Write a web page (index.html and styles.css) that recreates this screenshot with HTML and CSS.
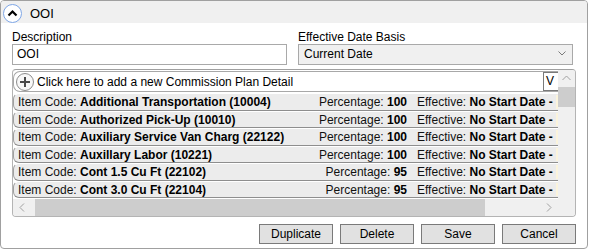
FILE: index.html
```html
<!DOCTYPE html>
<html>
<head>
<meta charset="utf-8">
<link rel="stylesheet" href="styles.css">
</head>
<body>
<div class="panel">
  <div class="header">
    <span class="collapse">
      <svg width="11" height="8" viewBox="0 0 11 8"><path d="M1.5 6.5 L5.5 2.5 L9.5 6.5" fill="none" stroke="#000" stroke-width="2.2"/></svg>
    </span>
    <span class="title">OOI</span>
  </div>
  <div class="content">
    <div class="fields">
      <div class="field">
        <label class="lbl">Description</label>
        <div class="input">OOI</div>
      </div>
      <div class="field">
        <label class="lbl">Effective Date Basis</label>
        <div class="select">Current Date
          <svg class="caret" width="8" height="5" viewBox="0 0 8 5"><path d="M0.5 0.5 L4 4 L7.5 0.5" fill="none" stroke="#7a7a7a" stroke-width="1"/></svg>
        </div>
      </div>
    </div>
    <div class="list">
      <div class="viewport">
        <div class="rows">
          <div class="addrow">
            <span class="plus">
              <svg width="12" height="12" viewBox="0 0 12 12"><path d="M6 1 V11 M1 6 H11" stroke="#4a4a4a" stroke-width="2"/></svg>
            </span>
            <span class="addtext">Click here to add a new Commission Plan Detail</span>
            <span class="viewbtn">V</span>
          </div>
          <div class="row"><span class="code">Item Code: <b>Additional Transportation (10004)</b></span><span class="pct">Percentage: <b>100</b></span><span class="eff">Effective: <b>No Start Date -</b></span><span class="tail"></span></div>
          <div class="row"><span class="code">Item Code: <b>Authorized Pick-Up (10010)</b></span><span class="pct">Percentage: <b>100</b></span><span class="eff">Effective: <b>No Start Date -</b></span><span class="tail"></span></div>
          <div class="row"><span class="code">Item Code: <b>Auxiliary Service Van Charg (22122)</b></span><span class="pct">Percentage: <b>100</b></span><span class="eff">Effective: <b>No Start Date -</b></span><span class="tail"></span></div>
          <div class="row"><span class="code">Item Code: <b>Auxillary Labor (10221)</b></span><span class="pct">Percentage: <b>100</b></span><span class="eff">Effective: <b>No Start Date -</b></span><span class="tail"></span></div>
          <div class="row"><span class="code">Item Code: <b>Cont 1.5 Cu Ft (22102)</b></span><span class="pct">Percentage: <b>95</b></span><span class="eff">Effective: <b>No Start Date -</b></span><span class="tail"></span></div>
          <div class="row"><span class="code">Item Code: <b>Cont 3.0 Cu Ft (22104)</b></span><span class="pct">Percentage: <b>95</b></span><span class="eff">Effective: <b>No Start Date -</b></span><span class="tail"></span></div>
        </div>
      </div>
      <div class="vscroll">
        <svg class="uparrow" width="9" height="6" viewBox="0 0 9 6"><path d="M0.5 5 L4.5 1 L8.5 5" fill="none" stroke="#a0a0a0" stroke-width="1"/></svg>
        <div class="vthumb"></div>
      </div>
      <div class="hscroll">
        <svg class="leftarrow" width="6" height="9" viewBox="0 0 6 9"><path d="M5 0.5 L1 4.5 L5 8.5" fill="none" stroke="#a0a0a0" stroke-width="1"/></svg>
        <div class="hthumb"></div>
        <svg class="rightarrow" width="6" height="9" viewBox="0 0 6 9"><path d="M1 0.5 L5 4.5 L1 8.5" fill="none" stroke="#a0a0a0" stroke-width="1"/></svg>
      </div>
      <div class="corner"></div>
    </div>
    <div class="buttons">
      <button class="btn">Duplicate</button>
      <button class="btn">Delete</button>
      <button class="btn">Save</button>
      <button class="btn">Cancel</button>
    </div>
  </div>
</div>
</body>
</html>
```

FILE: styles.css
```css
* { box-sizing: border-box; }
html, body { margin: 0; padding: 0; background: #fff; }
body {
  font-family: "Liberation Sans", Arial, sans-serif;
  font-size: 12px;
  color: #000;
}
.panel {
  width: 588px;
  height: 249px;
  border: 1px solid #a0a0a0;
  border-radius: 4px;
  overflow: hidden;
  display: flex;
  flex-direction: column;
}
.header {
  height: 22px;
  background: #f0f0f0;
  display: flex;
  align-items: center;
  padding-left: 2px;
}
.collapse {
  width: 19px;
  height: 19px;
  margin-top: 3px;
  border: 1.5px solid #7ea6e6;
  border-radius: 50%;
  background: #fff;
  display: flex;
  align-items: center;
  justify-content: center;
}
.collapse svg { margin-top: -1px; }
.title {
  margin-left: 8px;
  font-size: 13px;
  margin-top: 2px;
}
.content {
  padding: 0 11px;
  flex: 1;
  display: flex;
  flex-direction: column;
}
.fields {
  display: grid;
  grid-template-columns: 275px 275px;
  column-gap: 11px;
  margin-top: 7px;
}
.field { display: flex; flex-direction: column; }
.lbl { height: 14px; line-height: 14px; font-size: 12px; }
.input, .select {
  height: 21px;
  border: 1px solid #a9a9a9;
  line-height: 19px;
  padding-left: 4px;
  font-size: 12px;
}
.input { background: #fff; }
.select {
  background: #f0f0f0;
  position: relative;
  padding-left: 5px;
}
.caret { position: absolute; right: 6px; top: 6px; }
.list {
  margin-top: 4px;
  width: 564px;
  height: 148px;
  border: 1px solid #b4b4b4;
  border-top-color: #a0a0a0;
  border-radius: 4px;
  display: grid;
  grid-template-columns: 1fr 17px;
  grid-template-rows: 1fr 17px;
  overflow: hidden;
  background: #fff;
}
.viewport {
  overflow: hidden;
  grid-column: 1;
  grid-row: 1;
}
.rows { width: 545px; padding-top: 1px; }
.addrow {
  height: 21px;
  border: 1px solid #a8a8a8;
  border-right: none;
  border-radius: 7px 0 0 7px;
  display: flex;
  align-items: center;
  background: #fff;
  margin-bottom: 1px;
}
.plus {
  width: 18px;
  height: 18px;
  margin-left: 2px;
  border: 1px solid #8c8c8c;
  border-radius: 50%;
  display: flex;
  align-items: center;
  justify-content: center;
  background: #f8f8f8;
}
.addtext { margin-left: 3px; width: 506px; white-space: nowrap; }
.viewbtn {
  flex: 1;
  height: 19px;
  line-height: 17px;
  border: 1px solid #7a7a7a;
  border-right: none;
  padding-left: 2px;
  background: #fff;
  overflow: hidden;
}
.row {
  height: 17.5px;
  line-height: 16px;
  border-left: 1px solid #a0a0a0;
  border-bottom: 1px solid #8e8e8e;
  border-top: 1px solid #fff;
  border-radius: 6px 0 0 6px;
  background: #ececec;
  display: flex;
  white-space: nowrap;
  color: #111;
}
.code { width: 290px; padding-left: 4px; }
.pct { width: 103px; text-align: right; }
.eff { margin-left: 10px; width: 139px; }
.tail { flex: 1; background: #fbf4dc; margin: 1px 0; }
b { font-weight: bold; color: #000; }
.vscroll {
  grid-column: 2;
  grid-row: 1;
  background: #f0f0f0;
  display: flex;
  flex-direction: column;
  align-items: center;
}
.uparrow { margin-top: 5px; }
.vthumb {
  margin-top: 6px;
  width: 17px;
  height: 20px;
  background: #cdcdcd;
}
.hscroll {
  grid-column: 1;
  grid-row: 2;
  background: #f0f0f0;
  display: flex;
  align-items: center;
}
.leftarrow { margin-left: 6px; }
.hthumb {
  margin-left: 10px;
  width: 450px;
  height: 17px;
  background: #cdcdcd;
}
.rightarrow { margin-left: auto; margin-right: 6px; }
.corner { grid-column: 2; grid-row: 2; background: #f0f0f0; }
.buttons {
  display: flex;
  justify-content: flex-end;
  gap: 7px;
  margin-top: 7px;
  width: 564px;
}
.btn {
  width: 74px;
  height: 20px;
  background: #e1e1e1;
  border: 1px solid #7a7a7a;
  font-family: "Liberation Sans", Arial, sans-serif;
  font-size: 12px;
  color: #000;
  padding: 0;
  line-height: 18px;
}
```
